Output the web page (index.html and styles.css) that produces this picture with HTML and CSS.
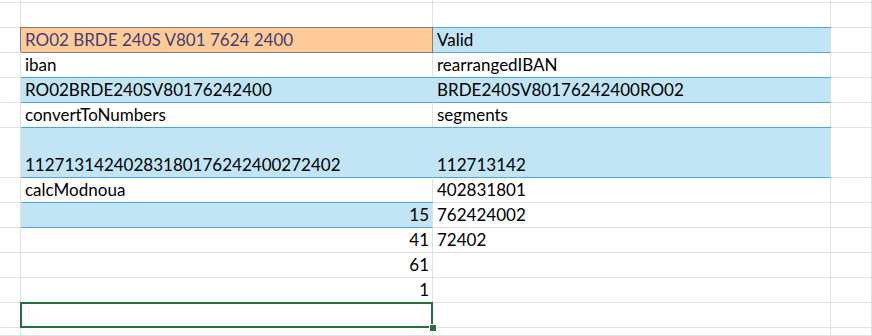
FILE: index.html
```html
<!DOCTYPE html>
<html lang="en">
<head>
<meta charset="utf-8">
<title>Sheet</title>
<link rel="stylesheet" href="styles.css">
</head>
<body>
<div class="sheet">
  <div class="c"></div><div class="c"></div><div class="c"></div><div class="c"></div>

  <div class="c"></div><div class="c"></div><div class="c"></div><div class="c"></div>

  <div class="c"></div><div class="c input">RO02 BRDE 240S V801 7624 2400</div><div class="c blue">Valid</div><div class="c"></div>

  <div class="c"></div><div class="c">iban</div><div class="c">rearrangedIBAN</div><div class="c"></div>

  <div class="c"></div><div class="c blue joined">RO02BRDE240SV80176242400</div><div class="c blue">BRDE240SV80176242400RO02</div><div class="c"></div>

  <div class="c"></div><div class="c">convertToNumbers</div><div class="c">segments</div><div class="c"></div>

  <div class="c"></div><div class="c blue joined">11271314240283180176242400272402</div><div class="c blue">112713142</div><div class="c"></div>

  <div class="c"></div><div class="c">calcModnoua</div><div class="c">402831801</div><div class="c"></div>

  <div class="c"></div><div class="c blue num">15</div><div class="c">762424002</div><div class="c"></div>

  <div class="c"></div><div class="c num">41</div><div class="c">72402</div><div class="c"></div>

  <div class="c"></div><div class="c num">61</div><div class="c"></div><div class="c"></div>

  <div class="c"></div><div class="c num">1</div><div class="c"></div><div class="c"></div>

  <div class="c"></div><div class="c selected"><span class="handle"></span></div><div class="c"></div><div class="c"></div>

  <div class="c"></div><div class="c"></div><div class="c"></div><div class="c"></div>
</div>
</body>
</html>
```

FILE: styles.css
```css
html, body {
  margin: 0;
  padding: 0;
  background: #ffffff;
}

body {
  width: 872px;
  height: 336px;
  overflow: hidden;
}

.sheet {
  display: grid;
  grid-template-columns: 21px 412px 398px 1fr;
  grid-template-rows: 3px repeat(5, 25px) 50px repeat(6, 25px) 1fr;
  height: 336px;
  font-family: Lato, "Liberation Sans", sans-serif;
  font-size: 17px;
  line-height: 20px;
  color: #000000;
}

.c {
  display: flex;
  align-items: flex-end;
  min-width: 0;
  padding: 0 3px 2px 4px;
  white-space: nowrap;
  background: #ffffff;
  border-right: 1px solid #e1e1e1;
  border-bottom: 1px solid #e1e1e1;
}

.blue {
  background: #c1e5f5;
  border-bottom-color: #4aa8dc;
  box-shadow: 0 -1px 0 #4aa8dc;
}

.blue.joined {
  border-right-color: #c1e5f5;
}

.input {
  background: #ffcc99;
  color: #3f3f76;
  border-right-color: #7f7f7f;
  border-bottom-color: #7f7f7f;
  box-shadow: -1px -1px 0 #7f7f7f, 0 -1px 0 #7f7f7f;
}

.num {
  justify-content: flex-end;
}

.selected {
  position: relative;
}

.selected::after {
  content: "";
  position: absolute;
  left: -1px;
  top: -1px;
  right: -1px;
  bottom: -1px;
  border: 2px solid #217346;
  pointer-events: none;
}

.handle {
  position: absolute;
  right: -4px;
  bottom: -4px;
  width: 6px;
  height: 6px;
  background: #217346;
  box-shadow: 0 0 0 1px #ffffff;
  z-index: 2;
}
```
